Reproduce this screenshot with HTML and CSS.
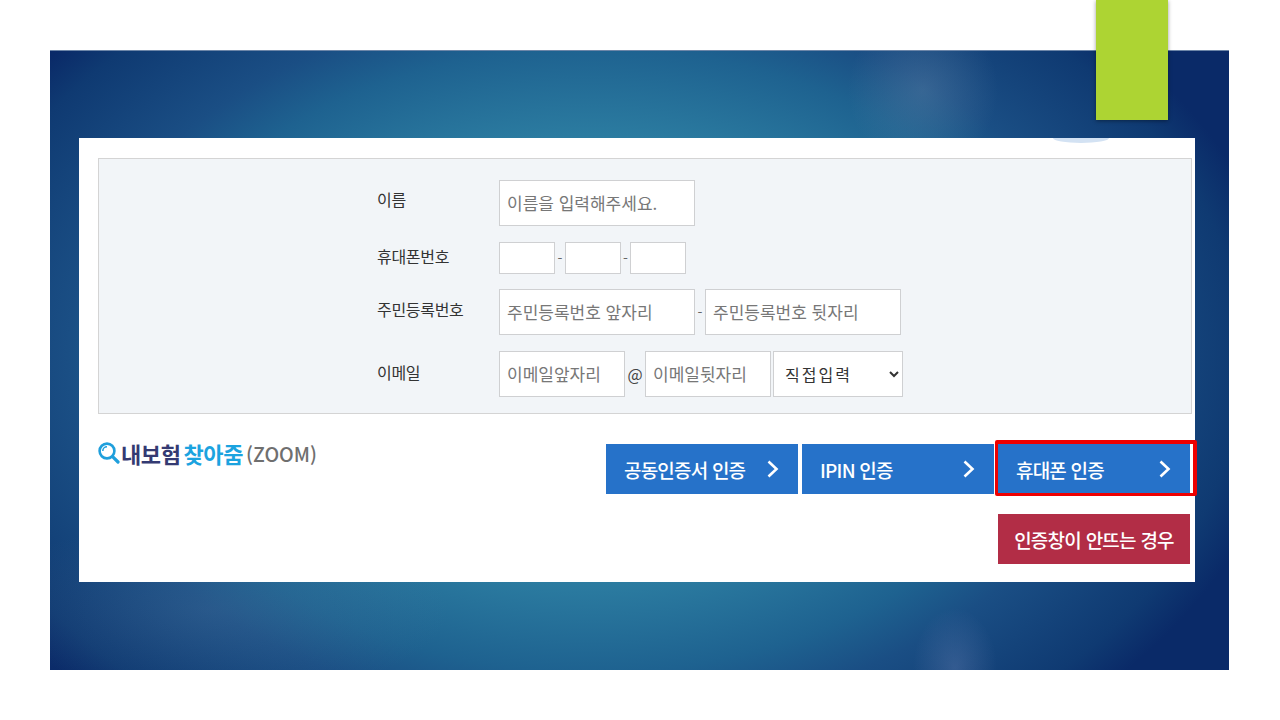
FILE: index.html
```html
<!DOCTYPE html>
<html lang="ko">
<head>
<meta charset="utf-8">
<title>내보험 찾아줌</title>
<link rel="stylesheet" href="styles.css">
</head>
<body>
<main class="stage">
  <div class="tab"></div>
  <div class="glow-peek"></div>
  <section class="card">
    <form class="panel">
      <label class="label label-name">이름</label>
      <div class="field"><input class="input wide" placeholder="이름을 입력해주세요."></div>
      <label class="label label-phone">휴대폰번호</label>
      <div class="field phone">
        <input class="input tiny"><span class="sep">-</span><input class="input tiny"><span class="sep sep-narrow">-</span><input class="input tiny">
      </div>
      <label class="label label-rrn">주민등록번호</label>
      <div class="field rrn">
        <input class="input wide" placeholder="주민등록번호 앞자리"><span class="sep">-</span><input class="input wide" placeholder="주민등록번호 뒷자리">
      </div>
      <label class="label label-mail">이메일</label>
      <div class="field mail">
        <input class="input mid" placeholder="이메일앞자리"><span class="at">@</span><input class="input mid" placeholder="이메일뒷자리"><select class="input select"><option>직접입력</option></select>
      </div>
    </form>
    <div class="lower">
      <div class="logo">
        <svg class="logo-icon" viewBox="0 0 22 22" width="22" height="22" aria-hidden="true">
          <circle cx="9" cy="9" r="7.4" fill="none" stroke="#1f9fdc" stroke-width="2.6"/>
          <path d="M4.8 9a4.2 4.2 0 0 1 4.2-4.2" fill="none" stroke="#1f9fdc" stroke-width="1.5"/>
          <path d="M14.6 14.6 20 20" fill="none" stroke="#1f9fdc" stroke-width="3.2" stroke-linecap="round"/>
        </svg>
        <span class="logo-a">내보험</span><span class="logo-b">찾아줌</span><span class="logo-c">(ZOOM)</span>
      </div>
      <div class="actions">
        <div class="auth-row">
          <a class="btn">공동인증서 인증<svg class="chev" viewBox="0 0 14 20" width="14" height="20" aria-hidden="true"><path d="M2.5 2.5 10.5 10l-8 7.5" fill="none" stroke="#fff" stroke-width="2.6"/></svg></a>
          <a class="btn">IPIN 인증<svg class="chev" viewBox="0 0 14 20" width="14" height="20" aria-hidden="true"><path d="M2.5 2.5 10.5 10l-8 7.5" fill="none" stroke="#fff" stroke-width="2.6"/></svg></a>
          <a class="btn active">휴대폰 인증<svg class="chev" viewBox="0 0 14 20" width="14" height="20" aria-hidden="true"><path d="M2.5 2.5 10.5 10l-8 7.5" fill="none" stroke="#fff" stroke-width="2.6"/></svg></a>
        </div>
        <a class="btn-help">인증창이 안뜨는 경우</a>
      </div>
    </div>
  </section>
</main>
</body>
</html>
```
FILE: styles.css
```css
* { box-sizing: border-box; }
html, body { margin: 0; height: 100%; }
body {
  width: 1280px;
  height: 720px;
  padding: 50px 51px 50px 50px;
  background: #fff;
  font-family: "Noto Sans CJK KR", "Noto Sans", sans-serif;
  overflow: hidden;
}
.stage {
  position: relative;
  width: 1179px;
  height: 620px;
  padding: 88px 34px 88px 29px;
  background:
    radial-gradient(ellipse 75px 80px at 873px 40px, rgba(120,150,180,.3), rgba(120,150,180,0) 100%),
    radial-gradient(ellipse 42px 60px at 905px 618px, rgba(120,140,190,.3), rgba(120,140,190,0) 100%),
    radial-gradient(ellipse 240px 90px at 160px 560px, rgba(120,150,180,.16), rgba(120,150,180,0) 100%),
    radial-gradient(ellipse 700px 480px at 46% 50%, #2f86a8 0%, #2b7ba0 47%, #1e6290 65%, #1a4e84 75%, #0f3a72 93%, #0a2a68 100%);
  box-shadow: inset 0 1px 0 #6d86a8;
}
.tab {
  position: absolute;
  top: -50px;
  left: 1046px;
  width: 72px;
  height: 120px;
  background: #add433;
  box-shadow: 0 1px 4px rgba(0,0,0,.4);
  z-index: 2;
}
.glow-peek {
  position: absolute;
  top: 88px;
  left: 1003px;
  width: 56px;
  height: 5px;
  border-radius: 0 0 50% 50% / 0 0 100% 100%;
  background: #d3e2f3;
  z-index: 2;
}
.card {
  width: 1116px;
  height: 444px;
  padding: 20px 3px 0 19px;
  background: #fff;
}
.panel {
  display: grid;
  grid-template-columns: 122px 1fr;
  grid-template-rows: 47px 32px 47px 47px;
  row-gap: 15px;
  align-content: start;
  width: 1094px;
  height: 256px;
  padding: 20.5px 0 0 278px;
  background: #f2f5f8;
  border: 1px solid #d4d4d4;
}
.label {
  align-self: start;
  font-size: 16px;
  line-height: 24px;
  letter-spacing: -0.3px;
  color: #333;
}
.label-name { padding-top: 7px; }
.label-phone { padding-top: 2px; }
.label-rrn { padding-top: 8px; }
.label-mail { padding-top: 9px; }
.field { display: flex; align-items: flex-start; height: 100%; }
.input {
  height: 46.5px;
  margin: 0;
  padding: 0 7px;
  background: #fff;
  border: 1px solid #cfd0d2;
  border-radius: 0;
  font-family: inherit;
  font-size: 17px;
  color: #444;
  outline: 0;
}
.input::placeholder { color: #777; opacity: 1; }
.wide { width: 196px; }
.tiny { width: 56px; height: 32px; }
.mid { width: 126px; }
.select {
  width: 130px;
  margin-left: 2px;
  padding: 0 4px 0 7px;
  font-size: 16px;
  color: #333;
  letter-spacing: 2px;
}
.sep {
  display: flex;
  align-items: center;
  justify-content: center;
  width: 10px;
  height: 100%;
  font-size: 14px;
  color: #666;
}
.sep-narrow { width: 9px; }
.at {
  display: flex;
  align-items: center;
  justify-content: center;
  width: 20px;
  height: 46px;
  font-size: 16px;
  color: #444;
}
.lower {
  display: flex;
  justify-content: space-between;
  padding-top: 30px;
}
.logo {
  display: flex;
  align-items: center;
  height: 22px;
  margin-top: -2px;
  font-size: 22px;
  font-weight: 700;
  letter-spacing: -0.4px;
  white-space: nowrap;
}
.logo-icon { flex: none; margin-right: 1px; }
.logo-a { color: #343a72; margin-right: 3px; }
.logo-b { color: #1ba3df; margin-right: 3px; }
.logo-c { color: #6f6f6f; font-weight: 500; font-size: 19.5px; letter-spacing: 0; }
.actions {
  display: flex;
  flex-direction: column;
  align-items: flex-end;
  gap: 20px;
  padding-right: 2px;
}
.auth-row { display: flex; gap: 4px; }
.btn {
  position: relative;
  display: flex;
  align-items: center;
  justify-content: space-between;
  width: 192px;
  height: 50px;
  padding: 0 18px;
  background: #2672c9;
  color: #fff;
  font-size: 19px;
  font-weight: 500;
  letter-spacing: -0.8px;
  white-space: nowrap;
}
.btn.active::after {
  content: "";
  position: absolute;
  top: -4px;
  right: -7px;
  bottom: -2px;
  left: -3px;
  border: 4px solid #ee0000;
  border-left-width: 3px;
  border-bottom-width: 3px;
  border-radius: 2px;
}
.btn-help {
  display: flex;
  align-items: center;
  justify-content: center;
  width: 192px;
  height: 50px;
  background: #b22d46;
  color: #fff;
  font-size: 19px;
  font-weight: 500;
  letter-spacing: -0.75px;
  white-space: nowrap;
}
```
